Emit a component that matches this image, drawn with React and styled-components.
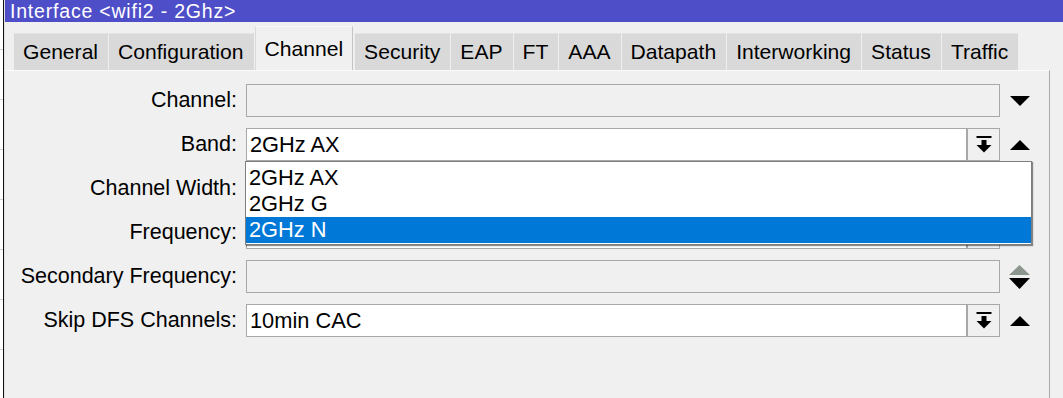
import React from 'react';
import styled, { createGlobalStyle } from 'styled-components';

const tabs = ['General', 'Configuration', 'Channel', 'Security', 'EAP', 'FT', 'AAA', 'Datapath', 'Interworking', 'Status', 'Traffic'];

const rows = [
  { label: 'Channel:', value: '', disabled: true, arrow: 'down' },
  { label: 'Band:', value: '2GHz AX', button: true, arrow: 'up', open: true },
  { label: 'Channel Width:', value: '', button: true, arrow: 'up' },
  { label: 'Frequency:', value: '', button: true, arrow: 'up' },
  { label: 'Secondary Frequency:', value: '', disabled: true, arrow: 'updown' },
  { label: 'Skip DFS Channels:', value: '10min CAC', button: true, arrow: 'up' },
];

const bandOptions = ['2GHz AX', '2GHz G', '2GHz N'];

const DownIcon = () => (
  <svg width="20" height="10" viewBox="0 0 20 10">
    <polygon points="0,0 20,0 10,10" fill="#000" />
  </svg>
);

const UpIcon = () => (
  <svg width="20" height="10" viewBox="0 0 20 10">
    <polygon points="0,10 20,10 10,0" fill="#000" />
  </svg>
);

const UpDownIcon = () => (
  <svg width="21" height="24" viewBox="0 0 21 24">
    <polygon points="0,10 21,10 10.5,0" fill="#8c968c" />
    <polygon points="0,13 21,13 10.5,24" fill="#000" />
  </svg>
);

const ToBottomIcon = () => (
  <svg width="16" height="17" viewBox="0 0 16 17">
    <rect x="0.5" y="0" width="15" height="2" fill="#000" />
    <rect x="5.5" y="4" width="5" height="5" fill="#000" />
    <polygon points="0.5,9 15.5,9 8,16.5" fill="#000" />
  </svg>
);

const App = () => {
  const renderArrow = (kind) => {
    if (kind === 'down') return <DownIcon />;
    if (kind === 'updown') return <UpDownIcon />;
    return <UpIcon />;
  };

  return (
    <>
      <GlobalStyle />
      <Page>
        <LeftEdge />
        <Window>
          <TitleBar>Interface &lt;wifi2 - 2Ghz&gt;</TitleBar>
          <TabStrip>
            {tabs.map((t) => (
              <Tab key={t} $active={t === 'Channel'}>{t}</Tab>
            ))}
          </TabStrip>
          <Panel>
            {rows.map((r) => (
              <React.Fragment key={r.label}>
                <Label>{r.label}</Label>
                <Field>
                  <Input $disabled={r.disabled}>{r.value}</Input>
                  {r.button && (
                    <DropButton>
                      <ToBottomIcon />
                    </DropButton>
                  )}
                  {r.open && (
                    <List>
                      {bandOptions.map((o) => (
                        <Item key={o} $selected={o === '2GHz N'}>{o}</Item>
                      ))}
                    </List>
                  )}
                </Field>
                <Arrow>{renderArrow(r.arrow)}</Arrow>
              </React.Fragment>
            ))}
          </Panel>
        </Window>
      </Page>
    </>
  );
};

export default App;

const GlobalStyle = createGlobalStyle`
  html, body {
    margin: 0;
    padding: 0;
    background: #f0f0f0;
  }
  body {
    font-family: "Liberation Sans", Arial, sans-serif;
    color: #000;
    overflow: hidden;
  }
`;

const Page = styled.div`
  display: flex;
  width: 1063px;
  height: 398px;
  overflow: hidden;
`;

const LeftEdge = styled.div`
  width: 3px;
  flex-shrink: 0;
  background: repeating-linear-gradient(to bottom, #ffffff 0 49px, #d4d4d4 49px 50px);
  border-right: 1px solid #111;
`;

const Window = styled.div`
  flex: 1;
  display: flex;
  flex-direction: column;
  border-left: 1px solid #e2e2e2;
  background: #f0f0f0;
  min-width: 0;
`;

const TitleBar = styled.div`
  height: 22px;
  display: flex;
  align-items: center;
  background: #4e4ec8;
  color: #ffffff;
  font-size: 19.5px;
  line-height: 20px;
  letter-spacing: 0.8px;
  padding-left: 5px;
  white-space: nowrap;
`;

const TabStrip = styled.div`
  height: 48px;
  display: flex;
  align-items: flex-end;
  padding-left: 8px;
  box-sizing: border-box;
`;

const Tab = styled.div`
  box-sizing: border-box;
  height: ${(p) => (p.$active ? '44px' : '37px')};
  margin: ${(p) => (p.$active ? '0 1px 0 1px' : '0')};
  padding: 0 9px;
  display: flex;
  align-items: center;
  font-size: 21.1px;
  white-space: nowrap;
  background: ${(p) => (p.$active ? '#f0f0f0' : '#d9d9d9')};
  border-left: 1px solid ${(p) => (p.$active ? '#dadada' : '#efefef')};
  border-right: 1px solid ${(p) => (p.$active ? '#c4c4c4' : 'transparent')};
  border-top: 1px solid ${(p) => (p.$active ? '#fafafa' : '#e4e4e4')};
`;

const Panel = styled.div`
  flex: 1;
  margin-right: 13px;
  border-top: 1px solid #fbfbfb;
  border-right: 1px solid #a9a9a9;
  padding-top: 13px;
  display: grid;
  grid-template-columns: 232px 754px 21px;
  column-gap: 9px;
  row-gap: 11px;
  grid-auto-rows: 33px;
  align-content: start;
`;

const Label = styled.div`
  align-self: center;
  text-align: right;
  font-size: 21.5px;
  white-space: nowrap;
`;

const Field = styled.div`
  position: relative;
  display: flex;
  height: 33px;
`;

const Input = styled.div`
  flex: 1;
  box-sizing: border-box;
  height: 33px;
  border: 1px solid #a8a8a8;
  background: ${(p) => (p.$disabled ? '#f0f0f0' : '#ffffff')};
  padding-left: 3px;
  display: flex;
  align-items: center;
  font-size: 21.8px;
  white-space: nowrap;
`;

const DropButton = styled.div`
  box-sizing: border-box;
  width: 33px;
  height: 33px;
  border: 1px solid #a8a8a8;
  background: #f0f0f0;
  display: flex;
  align-items: center;
  justify-content: center;
`;

const Arrow = styled.div`
  display: flex;
  align-items: center;
  justify-content: center;
`;

const List = styled.div`
  position: absolute;
  top: 33px;
  left: -1px;
  width: 787px;
  box-sizing: border-box;
  padding: 3px 0 1px;
  background: #ffffff;
  border: 1px solid #7e7e7e;
  box-shadow: 1px 1px 1px rgba(0, 0, 0, 0.45);
  z-index: 10;
`;

const Item = styled.div`
  height: 26px;
  line-height: 26px;
  padding-left: 3px;
  font-size: 21.8px;
  white-space: nowrap;
  background: ${(p) => (p.$selected ? '#0078d7' : 'transparent')};
  color: ${(p) => (p.$selected ? '#ffffff' : '#000000')};
`;
